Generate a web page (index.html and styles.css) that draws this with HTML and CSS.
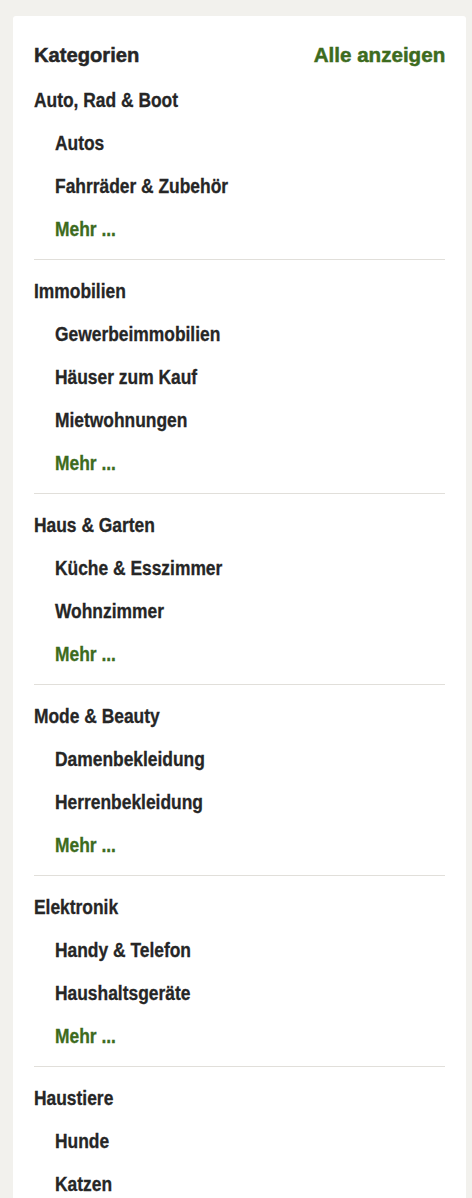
FILE: index.html
```html
<!DOCTYPE html>
<html lang="de">
<head>
<meta charset="utf-8">
<title>Kategorien</title>
<link rel="stylesheet" href="styles.css">
</head>
<body>
<div class="card">
  <div class="card-head">
    <span class="t title">Kategorien</span>
    <a class="t link all" href="#">Alle anzeigen</a>
  </div>
  <div class="section">
    <div class="cat"><span class="t">Auto, Rad &amp; Boot</span></div>
    <div class="sub"><span class="t">Autos</span></div>
    <div class="sub"><span class="t">Fahrräder &amp; Zubehör</span></div>
    <a class="sub link" href="#"><span class="t">Mehr ...</span></a>
  </div>
  <div class="section">
    <div class="cat"><span class="t">Immobilien</span></div>
    <div class="sub"><span class="t">Gewerbeimmobilien</span></div>
    <div class="sub"><span class="t">Häuser zum Kauf</span></div>
    <div class="sub"><span class="t">Mietwohnungen</span></div>
    <a class="sub link" href="#"><span class="t">Mehr ...</span></a>
  </div>
  <div class="section">
    <div class="cat"><span class="t">Haus &amp; Garten</span></div>
    <div class="sub"><span class="t">Küche &amp; Esszimmer</span></div>
    <div class="sub"><span class="t">Wohnzimmer</span></div>
    <a class="sub link" href="#"><span class="t">Mehr ...</span></a>
  </div>
  <div class="section">
    <div class="cat"><span class="t">Mode &amp; Beauty</span></div>
    <div class="sub"><span class="t">Damenbekleidung</span></div>
    <div class="sub"><span class="t">Herrenbekleidung</span></div>
    <a class="sub link" href="#"><span class="t">Mehr ...</span></a>
  </div>
  <div class="section">
    <div class="cat"><span class="t">Elektronik</span></div>
    <div class="sub"><span class="t">Handy &amp; Telefon</span></div>
    <div class="sub"><span class="t">Haushaltsgeräte</span></div>
    <a class="sub link" href="#"><span class="t">Mehr ...</span></a>
  </div>
  <div class="section">
    <div class="cat"><span class="t">Haustiere</span></div>
    <div class="sub"><span class="t">Hunde</span></div>
    <div class="sub"><span class="t">Katzen</span></div>
    <a class="sub link" href="#"><span class="t">Mehr ...</span></a>
  </div>
</div>
</body>
</html>
```

FILE: styles.css
```css
html, body {
  margin: 0;
  padding: 0;
  background: #f2f1ed;
}
body {
  padding: 16px 6px 0 13px;
  font-family: "Liberation Sans", Arial, sans-serif;
  font-weight: bold;
  color: #262626;
}
.card {
  background: #ffffff;
  border-radius: 3px;
  padding: 17px 21px 0 21px;
}
.t {
  display: inline-block;
  transform: scaleX(0.87);
  transform-origin: left center;
  white-space: nowrap;
  -webkit-text-stroke: 0.3px currentColor;
}
.card-head {
  display: flex;
  justify-content: space-between;
  align-items: baseline;
  font-size: 21px;
  line-height: 43px;
}
.card-head .t {
  transform: scaleX(0.96);
  -webkit-text-stroke: 0.5px currentColor;
}
.card-head .all {
  transform: scaleX(0.98);
  transform-origin: right center;
}
.link {
  color: #3d6b1e;
  text-decoration: none;
}
.section {
  display: flex;
  flex-direction: column;
  padding: 10px 0 8px 0;
  border-top: 1px solid #e1dfda;
  font-size: 20px;
  line-height: 43px;
}
.card-head + .section {
  border-top: none;
  padding-top: 3px;
}
.cat {
  display: block;
}
.sub {
  display: block;
  padding-left: 21px;
}
```
